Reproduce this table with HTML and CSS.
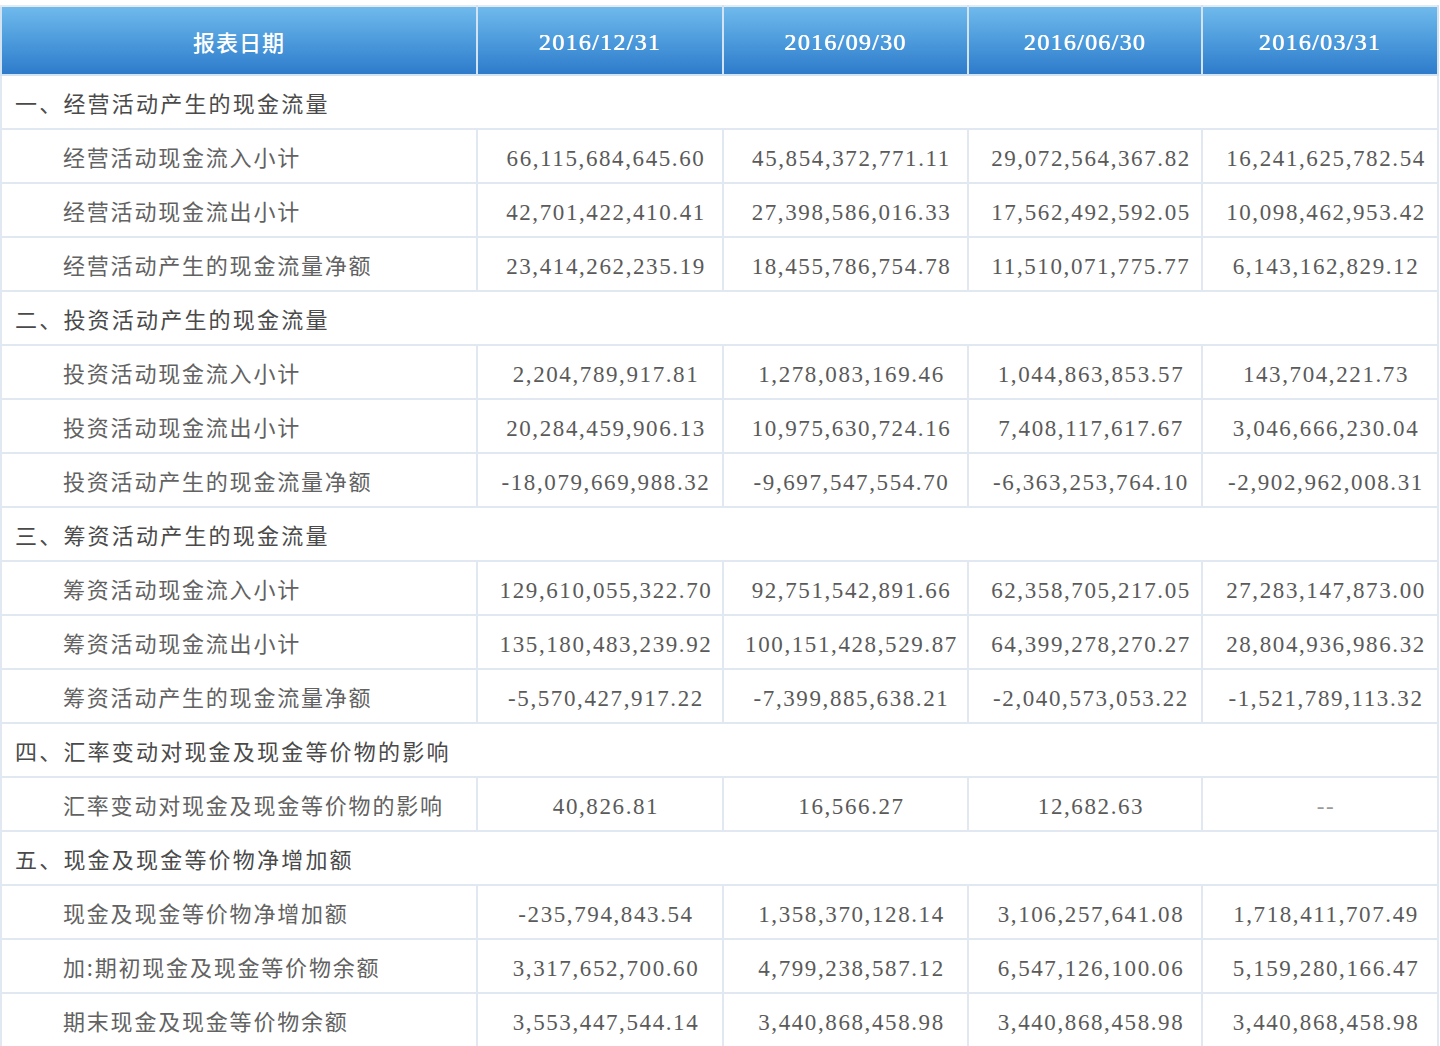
FILE: index.html
```html
<!DOCTYPE html>
<html lang="zh-CN">
<head>
<meta charset="utf-8">
<title>现金流量表</title>
<link rel="stylesheet" href="styles.css">
</head>
<body>
<table class="cf">
  <colgroup>
    <col class="c-label"><col class="c1"><col class="c2"><col class="c3"><col class="c4">
  </colgroup>
  <thead>
    <tr class="head">
      <th class="hl">报表日期</th>
      <th>2016/12/31</th>
      <th>2016/09/30</th>
      <th>2016/06/30</th>
      <th>2016/03/31</th>
    </tr>
  </thead>
  <tbody>
    <tr class="sec"><td colspan="5">一、经营活动产生的现金流量</td></tr>
    <tr><td class="lbl">经营活动现金流入小计</td><td class="n">66,115,684,645.60</td><td class="n">45,854,372,771.11</td><td class="n">29,072,564,367.82</td><td class="n">16,241,625,782.54</td></tr>
    <tr><td class="lbl">经营活动现金流出小计</td><td class="n">42,701,422,410.41</td><td class="n">27,398,586,016.33</td><td class="n">17,562,492,592.05</td><td class="n">10,098,462,953.42</td></tr>
    <tr><td class="lbl">经营活动产生的现金流量净额</td><td class="n">23,414,262,235.19</td><td class="n">18,455,786,754.78</td><td class="n">11,510,071,775.77</td><td class="n">6,143,162,829.12</td></tr>
    <tr class="sec"><td colspan="5">二、投资活动产生的现金流量</td></tr>
    <tr><td class="lbl">投资活动现金流入小计</td><td class="n">2,204,789,917.81</td><td class="n">1,278,083,169.46</td><td class="n">1,044,863,853.57</td><td class="n">143,704,221.73</td></tr>
    <tr><td class="lbl">投资活动现金流出小计</td><td class="n">20,284,459,906.13</td><td class="n">10,975,630,724.16</td><td class="n">7,408,117,617.67</td><td class="n">3,046,666,230.04</td></tr>
    <tr><td class="lbl">投资活动产生的现金流量净额</td><td class="n">-18,079,669,988.32</td><td class="n">-9,697,547,554.70</td><td class="n">-6,363,253,764.10</td><td class="n">-2,902,962,008.31</td></tr>
    <tr class="sec"><td colspan="5">三、筹资活动产生的现金流量</td></tr>
    <tr><td class="lbl">筹资活动现金流入小计</td><td class="n">129,610,055,322.70</td><td class="n">92,751,542,891.66</td><td class="n">62,358,705,217.05</td><td class="n">27,283,147,873.00</td></tr>
    <tr><td class="lbl">筹资活动现金流出小计</td><td class="n">135,180,483,239.92</td><td class="n">100,151,428,529.87</td><td class="n">64,399,278,270.27</td><td class="n">28,804,936,986.32</td></tr>
    <tr><td class="lbl">筹资活动产生的现金流量净额</td><td class="n">-5,570,427,917.22</td><td class="n">-7,399,885,638.21</td><td class="n">-2,040,573,053.22</td><td class="n">-1,521,789,113.32</td></tr>
    <tr class="sec"><td colspan="5">四、汇率变动对现金及现金等价物的影响</td></tr>
    <tr><td class="lbl">汇率变动对现金及现金等价物的影响</td><td class="n">40,826.81</td><td class="n">16,566.27</td><td class="n">12,682.63</td><td class="n dash">--</td></tr>
    <tr class="sec"><td colspan="5">五、现金及现金等价物净增加额</td></tr>
    <tr><td class="lbl">现金及现金等价物净增加额</td><td class="n">-235,794,843.54</td><td class="n">1,358,370,128.14</td><td class="n">3,106,257,641.08</td><td class="n">1,718,411,707.49</td></tr>
    <tr><td class="lbl">加:期初现金及现金等价物余额</td><td class="n">3,317,652,700.60</td><td class="n">4,799,238,587.12</td><td class="n">6,547,126,100.06</td><td class="n">5,159,280,166.47</td></tr>
    <tr><td class="lbl">期末现金及现金等价物余额</td><td class="n">3,553,447,544.14</td><td class="n">3,440,868,458.98</td><td class="n">3,440,868,458.98</td><td class="n">3,440,868,458.98</td></tr>
  </tbody>
</table>
</body>
</html>
```

FILE: styles.css
```css
html, body {
  margin: 0;
  padding: 0;
  background: #ffffff;
}

body {
  padding-top: 5px;
  font-family: "Liberation Serif", "Noto Sans CJK SC", serif;
  color: #5a5a5a;
}

.cf {
  border-collapse: collapse;
  table-layout: fixed;
  width: 1439px;
  border: 2px solid #e3eaf2;
}

.c-label { width: 476px; }
.c1 { width: 246px; }
.c2 { width: 245px; }
.c3 { width: 234px; }
.c4 { width: 236px; }

.cf th,
.cf td {
  padding: 0;
  border: 2px solid #e1e8f1;
  white-space: nowrap;
  overflow: hidden;
}

.head {
  height: 69px;
}

.head th {
  background: linear-gradient(to bottom, #6fb9ec 0%, #4d9bdc 50%, #2e7bcb 100%);
  color: #ffffff;
  font-family: "Liberation Serif", "Noto Sans CJK SC", serif;
  font-weight: normal;
  font-size: 24px;
  letter-spacing: 1.3px;
  text-align: center;
  padding-top: 3px;
  text-shadow: 0 0 0.6px #ffffff, 0 0 0.6px #ffffff;
  border-color: #d3e3f2;
  border-top-color: #e3eaf2;
}

.head th.hl {
  font-family: "Noto Sans CJK SC", sans-serif;
  font-weight: 500;
  font-size: 22px;
  letter-spacing: 1px;
  padding-top: 1px;
  text-shadow: none;
}

.cf tbody tr {
  height: 54px;
}

.sec td {
  font-family: "Noto Sans CJK SC", sans-serif;
  font-size: 22px;
  letter-spacing: 2.2px;
  color: #4a4a4a;
  padding-left: 13px;
}

.lbl {
  font-family: "Noto Sans CJK SC", sans-serif;
  font-size: 22px;
  letter-spacing: 1.8px;
  color: #626262;
  padding-left: 61px !important;
}

.n {
  font-family: "Liberation Serif", serif;
  font-size: 23px;
  letter-spacing: 1.6px;
  text-align: center;
  padding-left: 12px !important;
  padding-top: 5px !important;
  color: #5a5a5a;
}

.dash {
  color: #9a9a9a;
}
```
